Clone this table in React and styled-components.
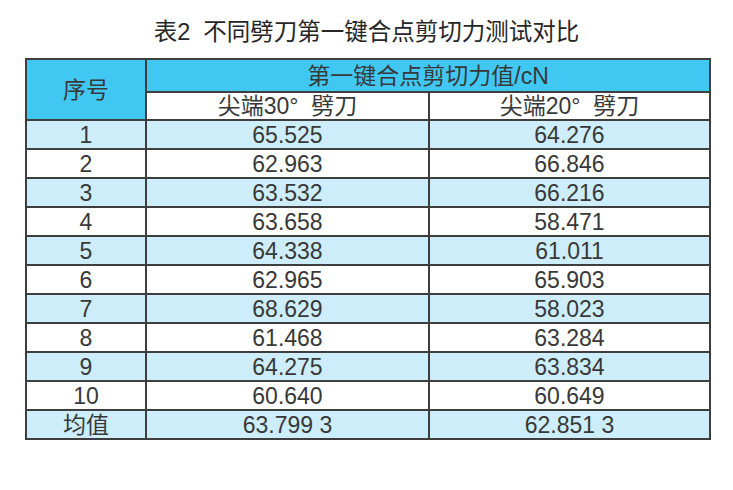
import React from "react";
import styled, { createGlobalStyle } from "styled-components";

const Global = createGlobalStyle`
  html, body { margin: 0; padding: 0; background: #ffffff; }
  body { font-family: "Liberation Sans", "Noto Sans CJK SC", sans-serif; color: #333; }
`;

const Page = styled.div`
  width: 733px;
  height: 490px;
  box-sizing: border-box;
  padding-top: 17px;
  display: flex;
  flex-direction: column;
  align-items: center;
  background: #fff;
`;

const Title = styled.h1`
  margin: 0 0 11px 0;
  height: 30px;
  line-height: 30px;
  text-align: center;
  font-size: 23.5px;
  font-weight: 400;
  color: #262626;
  font-family: "Liberation Sans", "Noto Sans CJK SC", sans-serif;
`;

const Table = styled.table`
  border-collapse: collapse;
  width: 684px;
  margin-left: 3px;
  table-layout: fixed;
  border: 2px solid #4a4a4a;
  font-size: 23px;
  color: #383838;
`;

const Col = styled.col`
  width: ${(p) => p.$w}px;
`;

const HeadCell = styled.th`
  border: 2px solid #3e3e3e;
  padding: 0;
  font-weight: 400;
  text-align: center;
  vertical-align: middle;
  height: 31px;
  line-height: 20px;
  background: #40c8f2;
`;

const SubCell = styled.td`
  border: 2px solid #3e3e3e;
  border-top-width: 1px;
  padding: 0;
  text-align: center;
  vertical-align: middle;
  height: 26px;
  line-height: 20px;
  background: #ffffff;
  white-space: pre;
`;

const DataCell = styled.td`
  border: 2px solid #3e3e3e;
  padding: 0;
  text-align: center;
  vertical-align: middle;
  height: 27px;
  line-height: 20px;
  background: ${(p) => (p.$light ? "#cdedfb" : "#ffffff")};
`;

const rows = [
  ["1", "65.525", "64.276"],
  ["2", "62.963", "66.846"],
  ["3", "63.532", "66.216"],
  ["4", "63.658", "58.471"],
  ["5", "64.338", "61.011"],
  ["6", "62.965", "65.903"],
  ["7", "68.629", "58.023"],
  ["8", "61.468", "63.284"],
  ["9", "64.275", "63.834"],
  ["10", "60.640", "60.649"],
  ["均值", "63.799 3", "62.851 3"],
];

export default function App() {
  return (
    <Page>
      <Global />
      <Title>表2&nbsp; 不同劈刀第一键合点剪切力测试对比</Title>
      <Table>
        <colgroup>
          <Col $w={120} />
          <Col $w={283} />
          <Col $w={281} />
        </colgroup>
        <tbody>
          <tr>
            <HeadCell rowSpan={2}>序号</HeadCell>
            <HeadCell colSpan={2}>第一键合点剪切力值/cN</HeadCell>
          </tr>
          <tr>
            <SubCell>{"尖端30°  劈刀"}</SubCell>
            <SubCell>{"尖端20°  劈刀"}</SubCell>
          </tr>
          {rows.map((r, i) => (
            <tr key={r[0]}>
              {r.map((v, j) => (
                <DataCell key={j} $light={i % 2 === 0}>{v}</DataCell>
              ))}
            </tr>
          ))}
        </tbody>
      </Table>
    </Page>
  );
}
